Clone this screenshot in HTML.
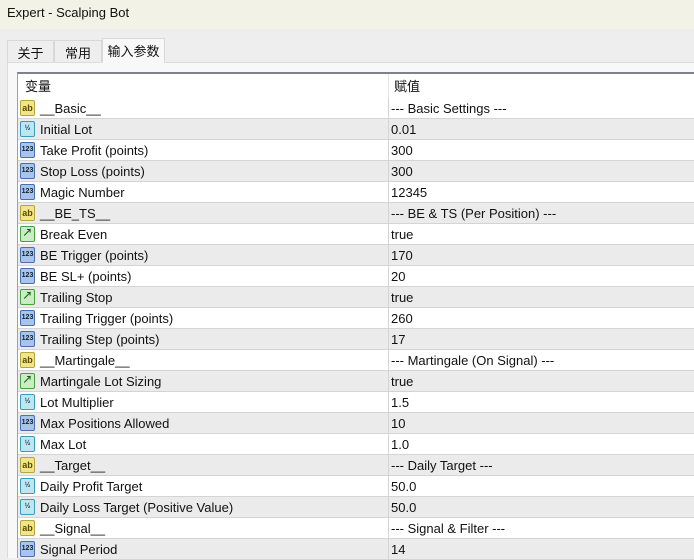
<!DOCTYPE html>
<html><head><meta charset="utf-8"><style>
*{margin:0;padding:0;box-sizing:border-box}
body{width:694px;height:558px;overflow:hidden;background:#eeeeee;font-family:"Liberation Sans","Noto Sans CJK SC",sans-serif;font-size:13px;color:#111;position:relative}
.title{position:absolute;left:0;top:0;width:694px;height:29px;background:#f3f2e6;padding:5px 0 0 7px;font-size:13px}
.tab{position:absolute;top:40px;height:23px;border:1px solid #d8d8d8;border-bottom:none;padding:2px 0 0 0;text-align:center;background:#eeeeee}
.panel{position:absolute;left:7px;top:62px;width:687px;height:496px;background:#f8f8f8;border-top:1px solid #dcdcdc;border-left:1px solid #dcdcdc}
.tbl{position:absolute;left:17px;top:72px;width:677px;height:486px;background:#fff;border-top:2px solid #7d828a;border-left:1px solid #a0a0a0}
.hdr{position:absolute;left:0;top:0;width:677px;height:24px}
.row{position:absolute;left:0;width:677px;height:21px;border-bottom:1px solid #d4d4d4}
.g{background:#ebebeb}
.n{position:absolute;left:22px;top:3px;white-space:nowrap}
.v{position:absolute;left:373px;top:3px;white-space:nowrap}
.div{position:absolute;left:370px;top:0;width:1px;height:486px;background:#d4d4d4}
.ic{position:absolute;left:2px;top:2px;width:15px;height:16px;border-radius:2px;font-size:7px;line-height:14px;text-align:center;font-weight:bold}
.ab{background:#f1e58a;border:1px solid #b5a63a;color:#5a4a00;font-size:9px}
.fr{background:#bfe6ef;border:1px solid #3b9cb8;color:#146;}
.nm{background:#a8c4ea;border:1px solid #4870b0;color:#123}
.bo{background:#c9ecc4;border:1px solid #48a040;color:#1a5a1a;font-size:10px}
</style></head><body>
<div class="title">Expert - Scalping Bot</div>
<div class="tab" style="left:7px;width:47px">关于</div>
<div class="tab" style="left:54px;width:48px">常用</div>
<div class="panel"></div>
<div class="tab" style="left:102px;top:38px;width:63px;height:25px;background:#f8f8f8;z-index:2">输入参数</div>
<div class="tbl">
<div class="hdr"><span class="n" style="left:7px;top:2px">变量</span><span class="v" style="left:376px;top:2px">赋值</span></div>
<div class="div" style="top:0;height:24px;background:#e6e6e6"></div>
<div id="rows"></div>
<div class="div" style="top:24px;height:462px"></div>
</div>
<script>
var d=[["ab","__Basic__","--- Basic Settings ---"],["fr","Initial Lot","0.01"],["nm","Take Profit (points)","300"],["nm","Stop Loss (points)","300"],["nm","Magic Number","12345"],["ab","__BE_TS__","--- BE & TS (Per Position) ---"],["bo","Break Even","true"],["nm","BE Trigger (points)","170"],["nm","BE SL+ (points)","20"],["bo","Trailing Stop","true"],["nm","Trailing Trigger (points)","260"],["nm","Trailing Step (points)","17"],["ab","__Martingale__","--- Martingale (On Signal) ---"],["bo","Martingale Lot Sizing","true"],["fr","Lot Multiplier","1.5"],["nm","Max Positions Allowed","10"],["fr","Max Lot","1.0"],["ab","__Target__","--- Daily Target ---"],["fr","Daily Profit Target","50.0"],["fr","Daily Loss Target (Positive Value)","50.0"],["ab","__Signal__","--- Signal & Filter ---"],["nm","Signal Period","14"]];
var t={ab:"ab",fr:"½",nm:"123",bo:"↗"};var h="";
d.forEach(function(r,i){h+='<div class="row'+(i%2?' g':'')+'" style="top:'+(24+i*21)+'px"><span class="ic '+r[0]+'">'+t[r[0]]+'</span><span class="n">'+r[1]+'</span><span class="v">'+r[2]+'</span></div>';});
document.getElementById("rows").innerHTML=h;
</script>
</body></html>
